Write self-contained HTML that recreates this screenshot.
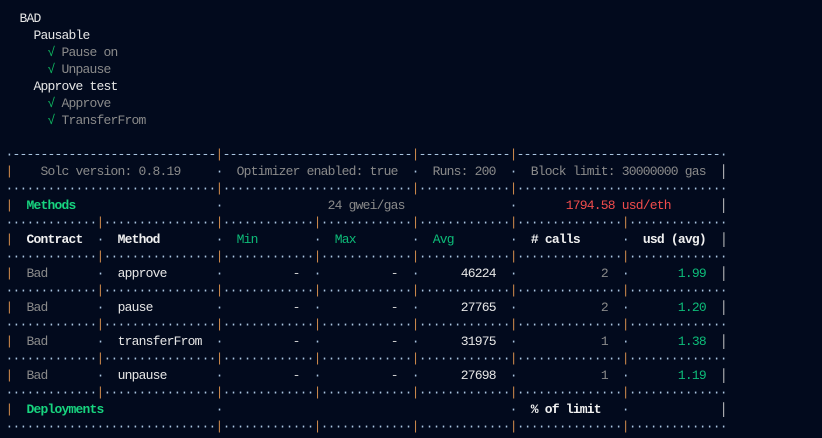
<!DOCTYPE html>
<html><head><meta charset="utf-8"><style>
html,body{margin:0;padding:0;background:#020a1d;width:822px;height:438px;overflow:hidden}
pre{margin:0;padding:10px 0 0 5.5px;font-family:"Liberation Mono",monospace;font-size:13px;letter-spacing:-0.8px;line-height:17px;color:#cccccc;white-space:pre}
.g{color:#8a8a8a}.ck{color:#0fbf63}.w{color:#e6e6e6}
.d{color:#a9c4e0}.o{color:#c8864a}.r{color:#f14c4c}.gr{color:#11c47a}.gn{color:#0dbc79}
.b{font-weight:bold;color:#f0f0f0}.bg{font-weight:bold;color:#17d47f}.v{color:#cfcfcf}
</style></head><body><pre>  <span class="w">BAD</span>
    <span class="w">Pausable</span>
      <span class="ck">√</span> <span class="g">Pause on</span>
      <span class="ck">√</span> <span class="g">Unpause</span>
    <span class="w">Approve test</span>
      <span class="ck">√</span> <span class="g">Approve</span>
      <span class="ck">√</span> <span class="g">TransferFrom</span>

<span class="d">·-----------------------------<span class="o">|</span>---------------------------<span class="o">|</span>-------------<span class="o">|</span>-----------------------------·</span>
<span class="o">|</span><span class="g">    Solc version: 0.8.19     </span><span class="d">·</span><span class="g">  Optimizer enabled: true  </span><span class="d">·</span><span class="g">  Runs: 200  </span><span class="d">·</span><span class="g">  Block limit: 30000000 gas  </span><span class="v">│</span>
<span class="d">··········<!---->··········<!---->··········<span class="o">|</span>··········<!---->··········<!---->·······<span class="o">|</span>··········<!---->···<span class="o">|</span>··········<!---->··········<!---->··········</span>
<span class="o">|</span>  <span class="bg">Methods</span>                    <span class="d">·</span>               <span class="g">24 gwei/gas</span>               <span class="d">·</span>       <span class="r">1794.58 usd/eth</span>       <span class="v">│</span>
<span class="d">·············<span class="o">|</span>················<span class="o">|</span>·············<span class="o">|</span>·············<span class="o">|</span>·············<span class="o">|</span>···············<span class="o">|</span>··············</span>
<span class="o">|</span>  <span class="b">Contract</span>  <span class="d">·</span>  <span class="b">Method</span>        <span class="d">·</span>  <span class="gn">Min</span>        <span class="d">·</span>  <span class="gn">Max</span>        <span class="d">·</span>  <span class="gn">Avg</span>        <span class="d">·</span>  <span class="b"># calls</span>      <span class="d">·</span>  <span class="b">usd (avg)</span>  <span class="v">│</span>
<span class="d">·············<span class="o">|</span>················<span class="o">|</span>·············<span class="o">|</span>·············<span class="o">|</span>·············<span class="o">|</span>···············<span class="o">|</span>··············</span>
<span class="o">|</span>  <span class="g">Bad</span>       <span class="d">·</span>  <span class="w">approve</span>       <span class="d">·</span>          -  <span class="d">·</span>          -  <span class="d">·</span>      <span class="w">46224</span>  <span class="d">·</span>            <span class="g">2</span>  <span class="d">·</span>       <span class="gn">1.99</span>  <span class="v">│</span>
<span class="d">·············<span class="o">|</span>················<span class="o">|</span>·············<span class="o">|</span>·············<span class="o">|</span>·············<span class="o">|</span>···············<span class="o">|</span>··············</span>
<span class="o">|</span>  <span class="g">Bad</span>       <span class="d">·</span>  <span class="w">pause</span>         <span class="d">·</span>          -  <span class="d">·</span>          -  <span class="d">·</span>      <span class="w">27765</span>  <span class="d">·</span>            <span class="g">2</span>  <span class="d">·</span>       <span class="gn">1.20</span>  <span class="v">│</span>
<span class="d">·············<span class="o">|</span>················<span class="o">|</span>·············<span class="o">|</span>·············<span class="o">|</span>·············<span class="o">|</span>···············<span class="o">|</span>··············</span>
<span class="o">|</span>  <span class="g">Bad</span>       <span class="d">·</span>  <span class="w">transferFrom</span>  <span class="d">·</span>          -  <span class="d">·</span>          -  <span class="d">·</span>      <span class="w">31975</span>  <span class="d">·</span>            <span class="g">1</span>  <span class="d">·</span>       <span class="gn">1.38</span>  <span class="v">│</span>
<span class="d">·············<span class="o">|</span>················<span class="o">|</span>·············<span class="o">|</span>·············<span class="o">|</span>·············<span class="o">|</span>···············<span class="o">|</span>··············</span>
<span class="o">|</span>  <span class="g">Bad</span>       <span class="d">·</span>  <span class="w">unpause</span>       <span class="d">·</span>          -  <span class="d">·</span>          -  <span class="d">·</span>      <span class="w">27698</span>  <span class="d">·</span>            <span class="g">1</span>  <span class="d">·</span>       <span class="gn">1.19</span>  <span class="v">│</span>
<span class="d">·············<span class="o">|</span>················<span class="o">|</span>·············<span class="o">|</span>·············<span class="o">|</span>·············<span class="o">|</span>···············<span class="o">|</span>··············</span>
<span class="o">|</span>  <span class="bg">Deployments</span>                <span class="d">·</span>                                         <span class="d">·</span>  <span class="b">% of limit</span>   <span class="d">·</span>             <span class="v">│</span>
<span class="d">······························<span class="o">|</span>·············<span class="o">|</span>·············<span class="o">|</span>·············<span class="o">|</span>···············<span class="o">|</span>··············</span>
</pre></body></html>
